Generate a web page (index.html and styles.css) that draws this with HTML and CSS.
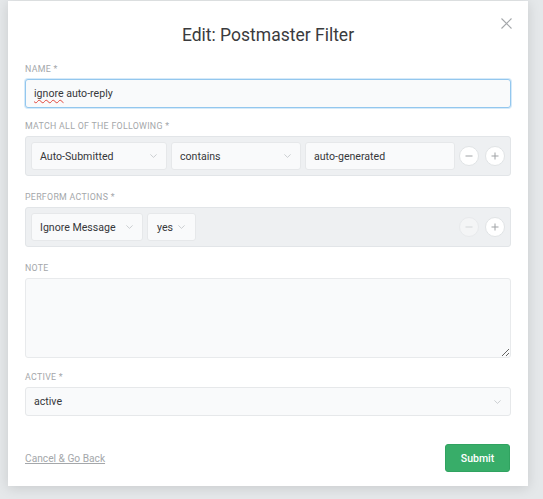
FILE: index.html
```html
<!DOCTYPE html>
<html lang="en">
<head>
<meta charset="utf-8">
<title>Edit: Postmaster Filter</title>
<link rel="stylesheet" href="styles.css">
</head>
<body>
<div class="modal">
  <button class="close" type="button" aria-label="Close">
    <svg width="11" height="11" viewBox="0 0 11 11"><path d="M0.5 0.5 L10.5 10.5 M10.5 0.5 L0.5 10.5" stroke="#a4a7aa" stroke-width="1.1" fill="none"/></svg>
  </button>
  <h1 class="title">Edit: Postmaster Filter</h1>
  <form class="form">
    <div class="group">
      <div class="label">Name *</div>
      <div class="field focus"><span class="spell">ignore</span>&nbsp;auto-reply</div>
    </div>

    <div class="group">
      <div class="label">Match all of the following *</div>
      <div class="rowbox">
        <div class="select w-attr"><span>Auto-Submitted</span><svg class="chev" width="7" height="4" viewBox="0 0 7 4"><path d="M0.4 0.4 L3.5 3.4 L6.6 0.4" stroke="#c6c9cc" stroke-width="0.9" fill="none"/></svg></div>
        <div class="select w-op"><span>contains</span><svg class="chev" width="7" height="4" viewBox="0 0 7 4"><path d="M0.4 0.4 L3.5 3.4 L6.6 0.4" stroke="#c6c9cc" stroke-width="0.9" fill="none"/></svg></div>
        <div class="field inline w-val">auto-generated</div>
        <div class="btns">
          <span class="circle"><svg width="8" height="8" viewBox="0 0 8 8"><path d="M0.5 4 H7.5" stroke="#9fa2a5" stroke-width="1"/></svg></span>
          <span class="circle"><svg width="8" height="8" viewBox="0 0 8 8"><path d="M0.5 4 H7.5 M4 0.5 V7.5" stroke="#9fa2a5" stroke-width="1"/></svg></span>
        </div>
      </div>
    </div>

    <div class="group group-actions">
      <div class="label">Perform actions *</div>
      <div class="rowbox">
        <div class="select w-act"><span>Ignore Message</span><svg class="chev" width="7" height="4" viewBox="0 0 7 4"><path d="M0.4 0.4 L3.5 3.4 L6.6 0.4" stroke="#c6c9cc" stroke-width="0.9" fill="none"/></svg></div>
        <div class="select w-yes"><span>yes</span><svg class="chev" width="7" height="4" viewBox="0 0 7 4"><path d="M0.4 0.4 L3.5 3.4 L6.6 0.4" stroke="#c6c9cc" stroke-width="0.9" fill="none"/></svg></div>
        <div class="btns">
          <span class="circle disabled"><svg width="8" height="8" viewBox="0 0 8 8"><path d="M0.5 4 H7.5" stroke="#d3d6d8" stroke-width="1"/></svg></span>
          <span class="circle"><svg width="8" height="8" viewBox="0 0 8 8"><path d="M0.5 4 H7.5 M4 0.5 V7.5" stroke="#9fa2a5" stroke-width="1"/></svg></span>
        </div>
      </div>
    </div>

    <div class="group group-note">
      <div class="label">Note</div>
      <textarea class="note"></textarea>
    </div>

    <div class="group group-active">
      <div class="label">Active *</div>
      <div class="select full"><span>active</span><svg class="chev" width="7" height="4" viewBox="0 0 7 4"><path d="M0.4 0.4 L3.5 3.4 L6.6 0.4" stroke="#c6c9cc" stroke-width="0.9" fill="none"/></svg></div>
    </div>
  </form>
  <div class="footer">
    <a class="cancel" href="#">Cancel &amp; Go Back</a>
    <button class="submit" type="button">Submit</button>
  </div>
</div>
</body>
</html>
```

FILE: styles.css
```css
* { box-sizing: border-box; }

html, body {
  margin: 0;
  padding: 0;
}

body {
  background: #e5e8ea;
  font-family: Roboto, "Noto Sans", "Liberation Sans", sans-serif;
  color: #38393b;
  width: 543px;
  height: 499px;
  overflow: hidden;
}

.modal {
  position: relative;
  margin: 1px 0 0 8px;
  width: 520px;
  height: 485px;
  background: #ffffff;
  padding: 24px 17px 14px 17px;
  box-shadow: 0 2px 12px rgba(0, 0, 0, 0.13);
  display: flex;
  flex-direction: column;
}

.close {
  position: absolute;
  top: 17px;
  right: 16px;
  width: 11px;
  height: 11px;
  padding: 0;
  border: 0;
  background: none;
  display: block;
}
.close svg { display: block; }

.title {
  margin: 0;
  text-align: center;
  font-size: 17.5px;
  line-height: 20px;
  font-weight: 400;
  color: #3a3b3d;
}

.form {
  margin-top: 19px;
  display: flex;
  flex-direction: column;
}

.group { display: flex; flex-direction: column; }
.group + .group { margin-top: 13px; }
.group.group-actions { margin-top: 16px; }
.group.group-note { margin-top: 16px; }
.group.group-active { margin-top: 14px; }

.label {
  font-size: 8.8px;
  line-height: 11px;
  letter-spacing: 0.3px;
  text-transform: uppercase;
  color: #a4a7aa;
  margin-bottom: 4px;
}

.field {
  height: 29px;
  border: 1px solid #e6e8ea;
  border-radius: 3px;
  background: #f9fafb;
  font-size: 10.6px;
  padding: 0 8px;
  display: flex;
  align-items: center;
  color: #36373a;
}

.field.focus {
  border-color: #93c7ee;
  box-shadow: 0 0 0 1px #d6eaf9;
}

.spell {
  text-decoration: underline wavy #e2473d;
  text-decoration-thickness: 1px;
  text-underline-offset: 2px;
}

.rowbox {
  height: 40px;
  border: 1px solid #e2e5e8;
  border-radius: 3px;
  background: #eef0f2;
  padding: 5px;
  display: flex;
  align-items: center;
  gap: 4px;
}

.select {
  height: 28px;
  border: 1px solid #e6e8ea;
  border-radius: 3px;
  background: #f9fafb;
  font-size: 10.6px;
  padding: 0 9px 0 8px;
  display: flex;
  align-items: center;
  justify-content: space-between;
  color: #36373a;
  white-space: nowrap;
}
.select .chev { display: block; flex: none; }

.field.inline { height: 28px; }

.w-attr { width: 136px; }
.w-op { width: 130px; }
.w-val { width: 150px; }
.w-act { width: 112px; }
.w-yes { width: 49px; padding: 0 10px 0 9px; }

.select.full {
  width: 100%;
  height: 29px;
}

.btns {
  margin-left: auto;
  display: flex;
  gap: 6px;
}

.circle {
  width: 20px;
  height: 20px;
  border-radius: 50%;
  background: #ffffff;
  border: 1px solid #e1e4e6;
  display: flex;
  align-items: center;
  justify-content: center;
}
.circle svg { display: block; }
.circle.disabled {
  background: #f4f5f6;
  border-color: #e8eaec;
}

.note {
  display: block;
  width: 100%;
  height: 80px;
  margin: 0;
  border: 1px solid #e8eaec;
  border-radius: 3px;
  background: #f9fafb;
  resize: vertical;
  font-family: inherit;
  font-size: 10.5px;
  outline: none;
}

.footer {
  margin-top: auto;
  display: flex;
  align-items: center;
  justify-content: space-between;
}

.cancel {
  font-size: 10.2px;
  color: #a4a7aa;
  text-decoration: underline;
  text-underline-offset: 1px;
}

.submit {
  width: 65px;
  height: 28px;
  margin-right: 1px;
  border: 1px solid #30a360;
  border-radius: 3px;
  background: #38ad69;
  color: #ffffff;
  font-family: inherit;
  font-size: 10.5px;
  font-weight: 500;
  padding: 0;
}
```
